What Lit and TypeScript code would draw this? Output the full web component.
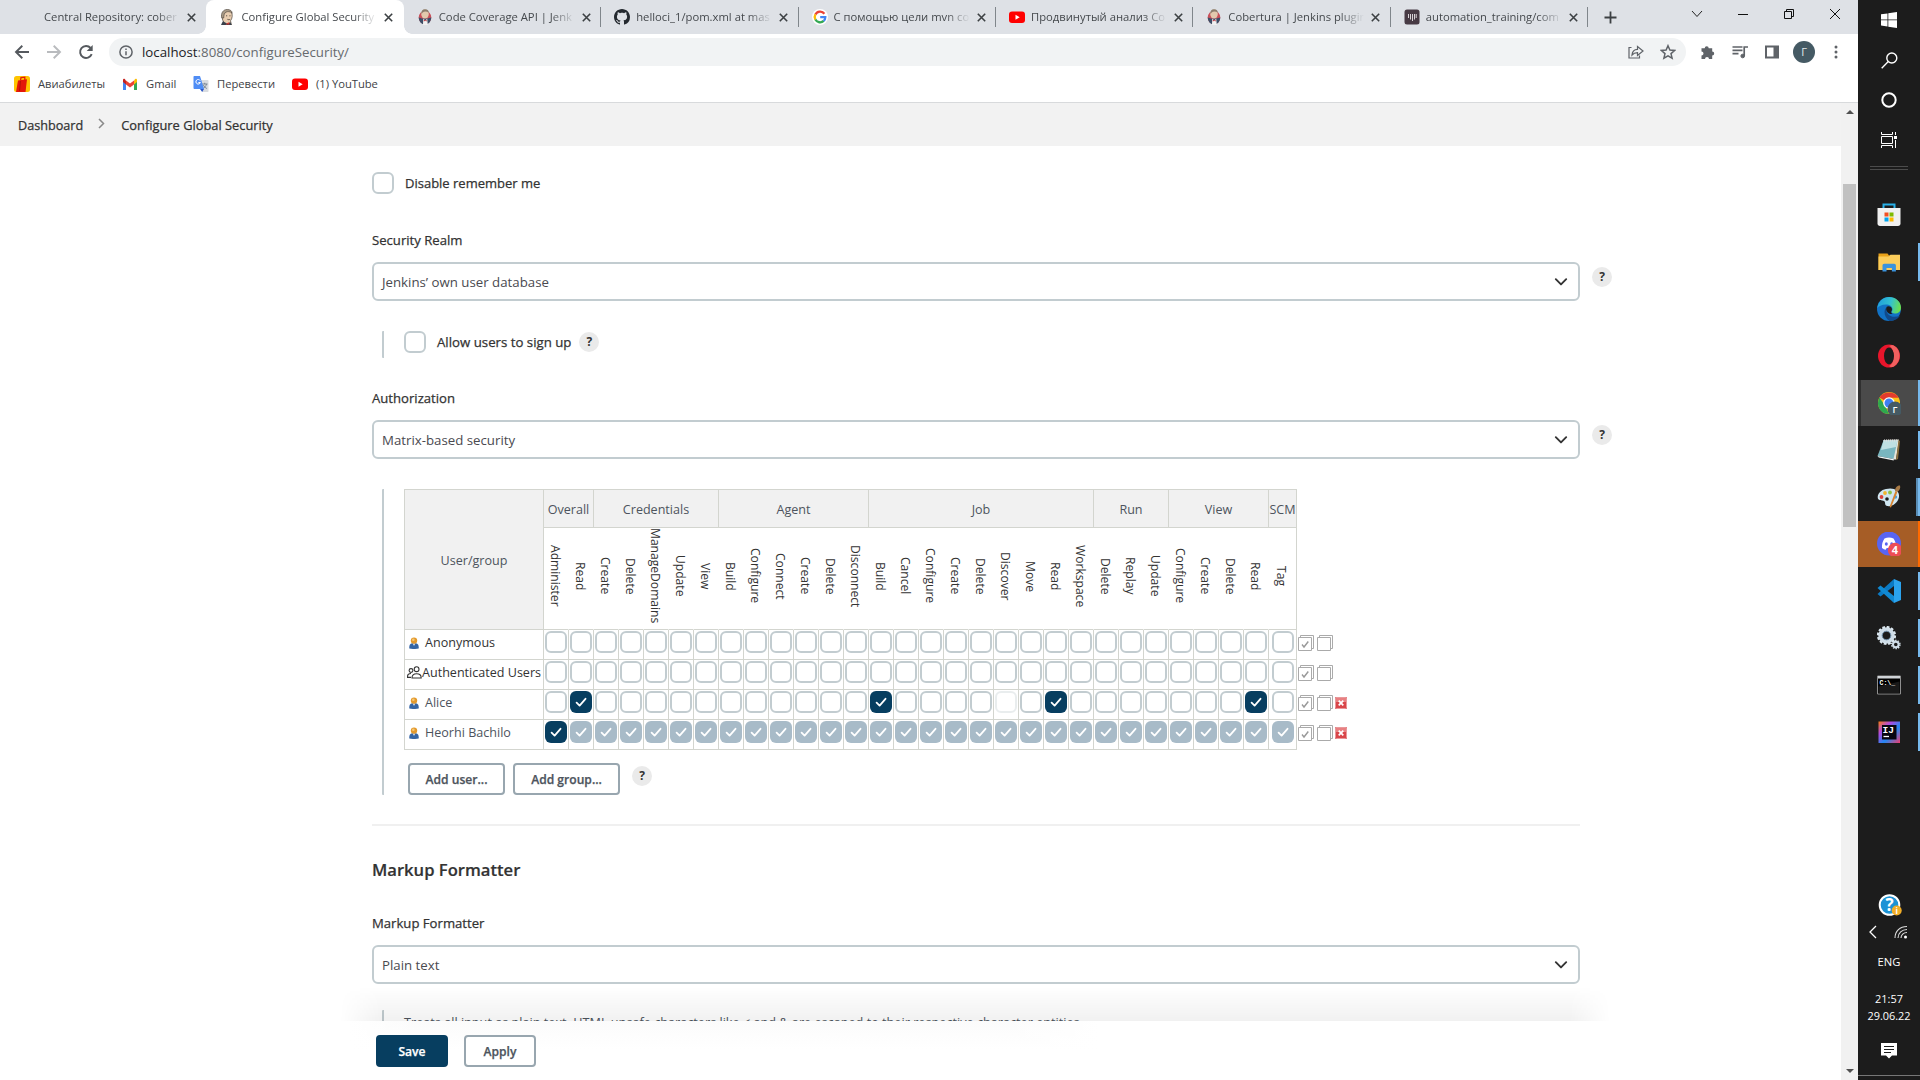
import { LitElement, html, css, svg, nothing } from "lit";
import { customElement, property } from "lit/decorators.js";
import { classMap } from "lit/directives/class-map.js";

const jenkinsFace = svg`
  <path d="M4 4C5 .8 10 .3 12.300 3c1.600 2.600 1 6.500-.8 8.800L12.500 16H4.500l.3-3C3 11 2.600 7 4 4z" fill="#e8cdb0" stroke="#4a4038" stroke-width=".7"/>
  <path d="M2.800 9C1.500 4 4.300.4 8.200.4c2.900 0 5 1.600 5 3.800-2-1.800-4.500-2-6.300-1C5.200 4.200 4.900 6 4.700 9z" fill="#a89a86" stroke="#4a4038" stroke-width=".6"/>
  <path d="M7 6.800h1.200M10.400 6.800h1.100M8.400 10.300c1 .5 2 .4 2.700 0" stroke="#42382f" stroke-width=".8" fill="none"/>
  <path d="M2 16l1.800-3.800L8 14.500l3.500-1.200L12.500 16z" fill="#39414b"/>
  <path d="M8 14.300l2.300-1v2.500l-1.600-.6L6.600 16z" fill="#d33833"/>`;
const jenkinsBadge = svg`
  <ellipse cx="8" cy="8.500" rx="6.300" ry="6.800" fill="#c9505a"/>
  <path d="M1.700 8.500C2 13 5 15.400 8 15.400s6-2.500 6.300-7l-4 1H5z" fill="#3c4f68"/>
  <ellipse cx="8" cy="5" rx="3.800" ry="4.500" fill="#e3c9ad"/>
  <path d="M4.400 5C4 1.500 6 0 8.300.3c2.200 0 3.700 1.700 3.600 3.500C9.500 2 7 2.500 5.700 3.500z" fill="#8c7d6c"/>
  <path d="M6.200 9.500l2 2 2-2 .6 6.500H6z" fill="#f1f1f1"/>
  <path d="M6.800 10.500l1.400 1 1.400-1v2l-1.400-.8-1.400.8z" fill="#b9323b"/>`;
const youtube = svg`<rect y="2.500" width="16" height="11.500" rx="3" fill="#f00"/><path d="M6.500 5.800v5l4.200-2.500z" fill="#fff"/>`;
const google = svg`
  <circle cx="8" cy="8" r="8" fill="#fff"/>
  <g fill="none" stroke-width="2.300">
  <path d="M12.400 4.700A5.300 5.300 0 0 0 3.400 5.600" stroke="#ea4335"/>
  <path d="M3.400 5.400a5.300 5.300 0 0 0 0 5.200" stroke="#fbbc05"/>
  <path d="M3.400 10.500a5.300 5.300 0 0 0 8.300 1.400" stroke="#34a853"/>
  <path d="M11.600 12A5.300 5.300 0 0 0 13.300 8.200H8.200" stroke="#4285f4"/></g>`;
const github = svg`<path fill="#24292f" fill-rule="evenodd" d="M8 0C3.580 0 0 3.580 0 8c0 3.540 2.290 6.530 5.470 7.590.4.070.55-.17.55-.38 0-.19-.010-.82-.010-1.490-2.010.37-2.530-.49-2.690-.94-.090-.23-.48-.94-.82-1.130-.28-.15-.68-.52-.010-.53.63-.010 1.080.58 1.230.82.72 1.210 1.870.87 2.330.66.070-.52.28-.87.51-1.070-1.780-.2-3.640-.89-3.640-3.950 0-.87.31-1.590.82-2.150-.080-.2-.36-1.020.080-2.120 0 0 .67-.21 2.200.82.64-.18 1.320-.27 2-.27s1.360.090 2 .27c1.530-1.040 2.200-.82 2.200-.82.44 1.100.16 1.920.080 2.120.51.56.82 1.270.82 2.150 0 3.070-1.870 3.750-3.650 3.950.29.25.54.73.54 1.480 0 1.070-.010 1.930-.010 2.200 0 .21.15.46.55.38A8.010 8.010 0 0 0 16 8c0-4.420-3.580-8-8-8z"/>`;
const training = svg`<rect x=".5" y=".5" width="15" height="15" rx="2.500" fill="#473a44"/><path d="M4.500 5v4M6.500 5v5.500M8.500 5v7M10.500 5v5.500M12.200 5v4" stroke="#e9e4e8" stroke-width=".9"/>`;

const tabs = [
  { title: "Central Repository: cober", icon: nothing },
  { title: "Configure Global Security", icon: jenkinsFace, active: true },
  { title: "Code Coverage API | Jenk", icon: jenkinsBadge },
  { title: "helloci_1/pom.xml at mas", icon: github },
  { title: "С помощью цели mvn co", icon: google },
  { title: "Продвинутый анализ Co", icon: youtube },
  { title: "Cobertura | Jenkins plugin", icon: jenkinsBadge },
  { title: "automation_training/com", icon: training },
];

const bookmarks = [
  { w: 108, title: "Авиабилеты", icon: svg`<rect width="16" height="16" rx="2.500" fill="#ffc400"/><path d="M4 4.500l9-1.200-1.500 12.700H2z" fill="#e3170a"/><path d="M6.500 4.500L7 1.500l3.800-.3v3" fill="none" stroke="#e3170a" stroke-width="1.300"/><path d="M6.500 5l-1 10" stroke="#a80f06" stroke-width=".8"/>` },
  { w: 71, title: "Gmail", icon: svg`<path d="M1 4.500V14h3V8z" fill="#4285f4"/><path d="M12 8v6h3V4.500z" fill="#34a853"/><path d="M1 3.500V6l3 2.500V4.700L2.800 3C2 2.400 1 2.700 1 3.500z" fill="#c5221f"/><path d="M4 4.500v4l4 3 4-3v-4l-4 3z" fill="#ea4335"/><path d="M12 4.600v3.900L15 6V3.500c0-.9-1-1.100-1.800-.5z" fill="#fbbc04"/>` },
  { w: 99, title: "Перевести", icon: svg`<path d="M7 4h7.500c.7 0 1 .4 1 1v10c0 .6-.3 1-1 1H9.500z" fill="#d9dce0"/><path d="M9 8h5.500M11.700 6.800V8M13.500 8c-.5 2.200-2 3.700-3.500 4.500M10.400 9c.6 1.500 2 2.800 3.500 3.500" fill="none" stroke="#74808c" stroke-width=".9"/><path d="M1.500 0H7l4 13H1.500C.8 13 .5 12.500.5 12V1c0-.6.300-1 1-1z" fill="#4f8df5"/><path d="M7.200 4.600A2.300 2.300 0 1 0 7.400 6.500H5.400" fill="none" stroke="#fff" stroke-width="1"/><path d="M7 13h4l-1.800 3z" fill="#2a56c6"/>` },
  { w: 100, title: "(1) YouTube", icon: youtube },
];

const groups: [string, string[]][] = [
  ["Overall", ["Administer", "Read"]],
  ["Credentials", ["Create", "Delete", "ManageDomains", "Update", "View"]],
  ["Agent", ["Build", "Configure", "Connect", "Create", "Delete", "Disconnect"]],
  ["Job", ["Build", "Cancel", "Configure", "Create", "Delete", "Discover", "Move", "Read", "Workspace"]],
  ["Run", ["Delete", "Replay", "Update"]],
  ["View", ["Configure", "Create", "Delete", "Read"]],
  ["SCM", ["Tag"]],
];
const permissions = groups.flatMap(([g, list]) => list.map((p) => `${g}/${p}`));

interface Member { name: string; group?: boolean; link?: boolean; removable?: boolean; checked: string[]; locked: string[] }
const members: Member[] = [
  { name: "Anonymous", checked: [], locked: [] },
  { name: "Authenticated Users", group: true, checked: [], locked: [] },
  { name: "Alice", link: true, removable: true, checked: ["Overall/Read", "Job/Build", "Job/Read", "View/Read"], locked: ["Job/Discover"] },
  { name: "Heorhi Bachilo", link: true, removable: true, checked: permissions, locked: permissions.slice(1) },
];

@customElement("jenkins-checkbox")
class JenkinsCheckbox extends LitElement {
  @property({ type: Boolean }) checked = false;
  @property({ type: Boolean }) disabled = false;
  static styles = css`
    :host { display: block; width: 22px; height: 22px; flex: none; }
    .box { box-sizing: border-box; width: 22px; height: 22px; border: 2px solid #c2ccd0; border-radius: 6px; background: #fff; }
    .on { border: 0; background: #073e60; }
    .off { opacity: .35; }
    .on.off { opacity: 1; background: #a8bbc8; }
    svg { display: block; }
  `;
  render() {
    return html`<div class=${classMap({ box: true, on: this.checked, off: this.disabled })}>
      ${this.checked ? html`<svg width="22" height="22" fill="none" stroke="#fff" stroke-width="1.8" stroke-linecap="round" stroke-linejoin="round"><path d="M6.600 11.600l3 3 5.900-6.800"/></svg>` : nothing}
    </div>`;
  }
}

@customElement("help-button")
class HelpButton extends LitElement {
  static styles = css`
    :host { display: flex; width: 20px; height: 20px; flex: none; border-radius: 50%; background: #eaeaea;
      align-items: center; justify-content: center; color: #333; font: 700 12px/20px "Open Sans", sans-serif; }
  `;
  render() { return html`?`; }
}

@customElement("jenkins-select")
class JenkinsSelect extends LitElement {
  @property() value = "";
  static styles = css`
    :host { display: flex; box-sizing: border-box; width: 1208px; height: 39px; flex: none; border: 2px solid #c2ccd0; border-radius: 6px;
      align-items: center; justify-content: space-between; padding: 0 10px 0 8px; background: #fff;
      color: #4a4a50; font: 13.250px/20px "Open Sans", sans-serif; }
    span { padding-top: 1px; }
  `;
  render() {
    return html`<span>${this.value}</span>
      <svg width="14" height="10" fill="none" stroke="#333" stroke-width="1.900" stroke-linecap="round" stroke-linejoin="round"><path d="M1.800 2.200L7 7.400 12.200 2.200"/></svg>`;
  }
}

@customElement("permission-matrix")
class PermissionMatrix extends LitElement {
  static styles = css`
    :host { display: block; font: 12.570px/18px "Open Sans", sans-serif; color: #4d545d; }
    .grid { display: grid; grid-template-columns: 139px repeat(29, 25px) 28px max-content; width: max-content;
      grid-template-rows: 38px 102px repeat(4, 30px); border-left: 1px solid #d3d5cf; position: relative; padding-top: 1px; }
    .grid::before { content: ""; position: absolute; left: 0; top: 0; width: 892px; height: 1px; background: #d3d5cf; }
    .cell { box-sizing: border-box; border-right: 1px solid #d3d5cf; border-bottom: 1px solid #d3d5cf; display: flex; justify-content: center; overflow: visible; }
    .corner { grid-row: span 2; background: #f1f1f1; align-items: center; padding-top: 3px; }
    .group { background: #f1f1f1; align-items: center; white-space: nowrap; padding-top: 3px; }
    .perm { border-right-color: transparent; align-items: center; padding: 0 3px 5px 0; font-size: 12.100px; color: #333; }
    .perm span { writing-mode: vertical-rl; white-space: nowrap; line-height: 18px; }
    .last { border-right-color: #d3d5cf; }
    .box { padding-top: 1px; }
    .spacer { grid-row: span 2; }
    .name { justify-content: flex-start; align-items: center; white-space: nowrap; padding: 0 0 4px 4px; color: #333; }
    .name svg { flex: none; margin-right: 6px; }
    .name.wide { padding-left: 2px; }
    .name.wide svg { margin-right: 0; }
    .link { color: #4d545d; }
    .tools { display: flex; padding: 5px 0 0 1px; }
    .tools svg { margin-right: 3px; }
    .tools svg.stop { margin: 2px 0 0 -1px; }
  `;
  render() {
    return html`<div class="grid">
      <div class="cell corner">User/group</div>
      ${groups.map(([g, list]) => html`<div class="cell group" style="grid-column: span ${list.length}">${g}</div>`)}
      <div class="spacer"></div>
      ${permissions.map((p, i) => html`<div class=${classMap({ cell: true, perm: true, last: i === permissions.length - 1 })}><span>${p.split("/")[1]}</span></div>`)}
      ${members.map((m) => this.row(m))}
    </div>`;
  }
  private row(m: Member) {
    return html`
      <div class=${classMap({ cell: true, name: true, wide: !!m.group, link: !!m.link })}>
        ${m.group
          ? html`<svg width="15" height="13" fill="none" stroke="#333" stroke-width="1.100"><circle cx="4" cy="4.500" r="1.900"/><circle cx="9.600" cy="3.200" r="2.400"/><path d="M.6 11.400v-1.600c.2-1.600 1.500-2.300 3.400-2.300M0 11.400h4M5 12c0-2.900 1.500-4.300 4.600-4.300s4.600 1.400 4.600 4.300z"/></svg>`
          : html`<svg width="10" height="12"><path d="M.3 11.500C0 8.500 1 6.500 3 6.300h4c2 .2 3 2.200 2.700 5.200C7 12.200 3 12.200.3 11.500z" fill="#3465a4"/><path d="M3.700 6.500L5 9l1.300-2.500z" fill="#dfe8f3"/><circle cx="5" cy="3.600" r="3.200" fill="#e39a2d"/><circle cx="4.300" cy="2.700" r="1.300" fill="#f6c878"/></svg>`}
        ${m.name}
      </div>
      ${permissions.map((p) => html`<div class="cell box"><jenkins-checkbox ?checked=${m.checked.includes(p)} ?disabled=${m.locked.includes(p)}></jenkins-checkbox></div>`)}
      <div class="tools">
        ${[true, false].map((c) => html`<svg width="16" height="17" fill="none" stroke="#aaa"><path d="M2.500 2.500v-2h13v13h-2"/><path d="M.5 2.500h13v13H.5z" fill="#fff"/>${c ? svg`<path d="M4 9.500l2 2.500 4.300-5.500" stroke="#999" stroke-width="1.400"/>` : nothing}</svg>`)}
        ${m.removable ? html`<svg class="stop" width="12" height="12"><rect width="12" height="12" rx="1" fill="#d9464a"/><rect x="0" y="0" width="12" height="5" rx="1" fill="#e87f81"/><rect x=".5" y=".5" width="11" height="11" rx="1" fill="none" stroke="#e99a9c"/><path d="M3.700 3.700l4.600 4.600M8.300 3.700l-4.600 4.600" stroke="#fff" stroke-width="1.700"/></svg>` : nothing}
      </div>`;
  }
}

const taskIcons = {
  store: svg`<path d="M6.500 6V1.500h11V6" fill="none" stroke="#29b0e8" stroke-width="2"/><path d="M.5 5h23v15.500c0 1.500-1 2.500-2.500 2.500H3c-1.500 0-2.500-1-2.500-2.500z" fill="#f0f0f0"/><path d="M7.500 9.500h4v4h-4z" fill="#f25022"/><path d="M12.500 9.500h4v4h-4z" fill="#7fba00"/><path d="M7.500 14.500h4v4h-4z" fill="#00a4ef"/><path d="M12.500 14.500h4v4h-4z" fill="#ffb900"/>`,
  folder: svg`<path d="M1.500 3.500h9l1.500 2h11V20h-21.500z" fill="#e9a21a"/><path d="M1.500 6.500h10l2-1.800H23V20H1.500z" fill="#fbcd5b"/><path d="M5.500 21.500v-6c0-1 .7-1.700 1.700-1.700h10c1 0 1.700.7 1.700 1.700v6h-4v-3.500H9.500v3.500z" fill="#3a93dd"/>`,
  edge: svg`<defs><linearGradient id="eg" x1="0" y1=".3" x2="1" y2=".5"><stop offset="0" stop-color="#1f9fdc"/><stop offset=".55" stop-color="#34c1d0"/><stop offset="1" stop-color="#6be04c"/></linearGradient></defs><circle cx="12" cy="12" r="12" fill="#1272c5"/><path d="M9.300 10.500C6 14 7.500 21 12.500 23.900c4.500.3 8.500-1.900 10.500-5.400C15 22 8 17.500 9.300 10.500z" fill="#114a8b"/><path d="M.3 11C1.200 4.500 6 0 12 0c7 0 12 5 12 10.500 0 4-3 6-6 6-2 0-3.500-.8-3.300-1.700.2-.6.8-1 .8-2.500C15.500 9.500 12.500 7.500 9 7.500 4.500 7.500 1.500 9.500.3 11z" fill="url(#eg)"/><path d="M9.700 9.800c1.500-1.500 5.300-.3 5.300 2.500 0 1.300-.6 2-.8 2.500-.2.500.1 1.500 1.500 2.200-4 .8-8-3-6-7.200z" fill="#1c1c1c"/>`,
  opera: svg`<ellipse cx="12" cy="12" rx="11" ry="11.500" fill="#e8152b"/><path d="M15 1c9 2 10.500 16 2 21.500-2 1-4 .7-5-.5 6-2 6-18 0-20z" fill="#f2605f"/><ellipse cx="12" cy="12" rx="5" ry="8.500" fill="#1c1c1c"/>`,
  chrome: svg`<circle cx="12" cy="12" r="11" fill="#fbc116"/><path d="M12 12L2.500 6.500C6 0 18-.5 21.600 6.800H12z" fill="#e33b2e"/><path d="M2.400 6.600l6 8.600L12 23C3 23-1.500 14 2.400 6.600z" fill="#2da94f"/><circle cx="12" cy="12" r="5.800" fill="#fff"/><circle cx="12" cy="12" r="4.500" fill="#3f7ff0"/><circle cx="18" cy="18" r="7.500" fill="#455a64"/><text class="cyr" x="15.500" y="21.500">Г</text>`,
  notepad: svg`<path d="M6 2l16-.5-3 20H16z" fill="#e7e4d8"/><path d="M21.500 2l1.500 1-2 18-2 1z" fill="#8b6f3c"/><path d="M6.500 2.500h14L16.500 21 .5 18z" fill="#79b6bf"/><path d="M6.500 2.500h14L19 9 4 12z" fill="#bfe0e2"/><path d="M.5 18l16 3 .3 1.500-15-3z" fill="#eef5f5"/><path d="M7 2.500h13" stroke="#ddd" stroke-width="2" stroke-dasharray="1 1"/>`,
  paint: svg`<path d="M9 4c7-2 14 1 13 8-1 6-7 10-12 9-3-1-1-4-3-5S.5 16 .7 12C1 8 4 5 9 4z" fill="#cfe6f1"/><circle cx="8" cy="8" r="1.900" fill="#f1b52e"/><circle cx="13" cy="7.500" r="1.900" fill="#8bc34a"/><circle cx="4.500" cy="12" r="1.900" fill="#d9413b"/><circle cx="10" cy="14" r="1.800" fill="#1c1c1c"/><circle cx="18.500" cy="12" r="1.700" fill="#4aa2d9"/><path d="M12.500 22l6-16 2 .8L14 22.500z" fill="#d88430"/><path d="M18 6c0-3 1.500-5.500 5-5.500.8 2-.5 5-2.500 6.300z" fill="#a77a46"/>`,
  discord: svg`<circle cx="12" cy="11.500" r="12" fill="#5865f2"/><path d="M7.500 6.500c3-1.200 6-1.200 9 0 2 3 2.800 6 2.500 9.500-1.300 1-2.500 1.500-3.700 1.700l-1-1.700H9.700l-1 1.700C7.500 17.500 6.300 17 5 16c-.3-3.500.5-6.500 2.500-9.500z" fill="#fff"/><ellipse cx="9.300" cy="12" rx="1.500" ry="1.700" fill="#5865f2"/><ellipse cx="14.700" cy="12" rx="1.500" ry="1.700" fill="#5865f2"/><circle cx="18" cy="18" r="7.200" fill="#ed4d55"/><text class="count" x="14.800" y="22">4</text>`,
  vscode: svg`<path d="M17 0l7 3v18l-7 3z" fill="#2ba3ee"/><path d="M17 0v7L3.500 17.500.5 15z" fill="#0b7ac4"/><path d="M17 24v-7L3.500 6.500.5 9z" fill="#1089d3"/>`,
  gears: svg`<circle cx="9.500" cy="9.500" r="6.300" fill="none" stroke="#cfdde8" stroke-width="4"/><circle cx="9.500" cy="9.500" r="8.600" fill="none" stroke="#dce8f0" stroke-width="2" stroke-dasharray="2.700 1.800"/><circle cx="9.500" cy="9.500" r="4.300" fill="none" stroke="#6f8ea9" stroke-width="1"/><circle cx="18.800" cy="18.500" r="2.800" fill="none" stroke="#cfdde8" stroke-width="2"/><circle cx="18.800" cy="18.500" r="4.200" fill="none" stroke="#dce8f0" stroke-width="1.300" stroke-dasharray="1.500 1.150"/>`,
  cmd: svg`<path d="M.5 3h23v18H.5z" fill="#000" stroke="#8f8f8f"/><path d="M1 3h22v2.500H1z" fill="#d0d4d8"/><path d="M1.500 13.500l21-5v12h-21z" fill="#2a2a2a" opacity=".6"/><text class="cmd" x="2.500" y="12">C:\\_</text>`,
  idea: svg`<defs><linearGradient id="ij" x1="0" y1="0" x2="1" y2="1"><stop offset="0" stop-color="#f97a12"/><stop offset=".3" stop-color="#b24ae0"/><stop offset=".6" stop-color="#2188f3"/><stop offset="1" stop-color="#f13c6e"/></linearGradient></defs><path d="M1.500 1.500h21.500v21.500H1.500z" fill="url(#ij)"/><path d="M5 5h14.500v14.500H5z" fill="#070612"/><text class="ij" x="5.500" y="13">IJ</text><path d="M6.500 16.500h5.500" stroke="#fff" stroke-width="1.300"/>`,
};
const running = [
  { icon: taskIcons.store, mark: "" }, { icon: taskIcons.folder, mark: "mark" },
  { icon: taskIcons.edge, mark: "" }, { icon: taskIcons.opera, mark: "" },
  { icon: taskIcons.chrome, mark: "mark current" }, { icon: taskIcons.notepad, mark: "mark" },
  { icon: taskIcons.paint, mark: "mark twice" }, { icon: taskIcons.discord, mark: "mark alert" },
  { icon: taskIcons.vscode, mark: "mark" }, { icon: taskIcons.gears, mark: "mark" },
  { icon: taskIcons.cmd, mark: "mark" }, { icon: taskIcons.idea, mark: "mark" },
];

@customElement("task-bar")
class TaskBar extends LitElement {
  static styles = css`
    :host { display: flex; flex-direction: column; width: 62px; height: 1080px; flex: none; background: #1c1c1c; color: #fff;
      font: 11.200px/17px "Open Sans", sans-serif; }
    svg { display: block; flex: none; }
    .sys { height: 40px; display: flex; align-items: center; justify-content: center; }
    .rule { box-sizing: border-box; height: 4px; margin: 6px 12px 21px; border: solid #4c4c4c; border-width: 1px 0; }
    .app { box-sizing: border-box; height: 46px; margin-top: 1px; display: flex; align-items: center; padding-left: 19px; }
    .mark::after { content: ""; margin-left: auto; width: 2px; height: 38px; background: #76b9ed; }
    .twice::after { width: 2px; border-left: 2px solid #5a8db5; }
    .current { background: #4a4a4a; border-left: 3px solid #303030; padding-left: 16px; }
    .current::after, .alert::after { height: 46px; }
    .alert { background: #a65d26; }
    .alert::after { background: #ff6a00; }
    .tray { margin-top: auto; display: flex; flex-direction: column; align-items: center; height: 186px; }
    .tray .help { margin-left: 1px; }
    .pair { display: flex; align-items: center; gap: 17px; height: 14px; margin-top: 9px; padding-right: 1px; }
    .lang { margin-top: 14px; }
    .time { margin-top: 20px; text-align: center; font-size: 10.900px; }
    .note { margin-top: 19px; }
    .end { align-self: stretch; height: 1px; background: #777; margin-top: auto; margin-bottom: 4px; }
    .cyr { font: 600 9px "Open Sans", sans-serif; fill: #fff; }
    .count { font: 700 11px "Open Sans", sans-serif; fill: #fff; }
    .cmd { font: 700 6.500px "Liberation Mono", monospace; fill: #fff; }
    .ij { font: 700 9.500px "Liberation Mono", monospace; fill: #fff; }
    .ask { font: 700 17px "Open Sans", sans-serif; fill: #fff; }
    .info { font: 700 8px "Open Sans", sans-serif; fill: #fff; }
  `;
  render() {
    return html`
      <div class="sys"><svg width="16" height="16" fill="#fff"><path d="M0 2.300l6.500-.9v6.100H0zM7.300 1.300L16 0v7.500H7.300zM0 8.300h6.500v6.200L0 13.600zM7.300 8.300H16V16l-8.700-1.300z"/></svg></div>
      <div class="sys"><svg width="17" height="17" fill="none" stroke="#fff" stroke-width="1.400"><circle cx="10.800" cy="6" r="5"/><path d="M7.300 9.600L.7 16.200"/></svg></div>
      <div class="sys"><svg width="16" height="16" fill="none" stroke="#fff" stroke-width="2"><circle cx="8" cy="8" r="6.700"/></svg></div>
      <div class="sys"><svg width="16" height="16" fill="none" stroke="#fff"><path d="M.5 0v2.500h11V0M.5 16v-2.500h11V16M.5 4.500h11v7H.5zM14.500 0v3M14.500 8v8"/><path d="M13 4h3v3h-3z" fill="#fff" stroke="none"/></svg></div>
      <div class="rule"></div>
      ${running.map((a) => html`<div class="app ${a.mark}"><svg width="24" height="24">${a.icon}</svg></div>`)}
      <div class="tray">
        <svg class="help" width="24" height="22"><circle cx="11.500" cy="11" r="9.800" fill="#1c93d6" stroke="#fff" stroke-width="2"/><text class="ask" x="7.500" y="17">?</text><circle cx="18.700" cy="16.500" r="5" fill="#f2ae27"/><text class="info" x="17.600" y="19.500">i</text></svg>
        <div class="pair">
          <svg width="8" height="14" fill="none" stroke="#fff" stroke-width="1.300"><path d="M7 1L1 7l6 6"/></svg>
          <svg width="14" height="14" fill="none" stroke="#fff" stroke-width="1.100"><path d="M1 13C1 6 6 1.500 13 1.500M4 13c0-5 4-8.500 9-8.500M7 13c0-3 2.500-5.500 6-5.500" opacity=".85"/><circle cx="11.500" cy="12" r="1.500" fill="#fff" stroke="none"/></svg>
        </div>
        <div class="lang">ENG</div>
        <div class="time">21:57<br>29.06.22</div>
        <svg class="note" width="16" height="16"><path d="M0 0h16v12.500h-5L8 15.500l-3-3H0z" fill="#fff"/><path d="M3 3.500h10M3 6.500h10M3 9.500h7" stroke="#1c1c1c"/></svg>
        <div class="end"></div>
      </div>`;
  }
}

@customElement("app-root")
class AppRoot extends LitElement {
  static styles = css`
    :host { display: flex; width: 1920px; height: 1080px; overflow: hidden; background: #fff; font-family: "Open Sans", "Noto Sans", sans-serif; }
    svg { display: block; flex: none; }
    .browser { width: 1858px; flex: none; display: flex; flex-direction: column; }
    .tabs { box-sizing: border-box; height: 34px; flex: none; display: flex; background: #dee1e6; padding-left: 9px; }
    .tab { box-sizing: border-box; width: 197.400px; flex: none; display: flex; align-items: center; padding-left: 13px; height: 34px; font-size: 11.260px; color: #45494d; position: relative; }
    .tab .fav { width: 16px; height: 16px; margin-right: 6px; }
    .title { width: 136px; overflow: hidden; white-space: nowrap; line-height: 18px; -webkit-mask-image: linear-gradient(90deg, #000 112px, transparent 136px); mask-image: linear-gradient(90deg, #000 112px, transparent 136px); }
    .tab .x { margin-left: 7px; }
    .divided::after { content: ""; position: absolute; right: 0; top: 7px; width: 1px; height: 20px; background: #80868b; }
    .active { background: #fff; border-radius: 8px 8px 0 0; }
    .active::before, .active::after { content: ""; position: absolute; bottom: 0; width: 8px; height: 8px; }
    .active::before { left: -8px; background: radial-gradient(circle at 0 0, transparent 7.500px, #fff 8px); }
    .active::after { right: -8px; background: radial-gradient(circle at 100% 0, transparent 7.500px, #fff 8px); }
    .plus { margin: 11px 0 0 16px; }
    .window { margin-left: auto; display: flex; gap: 34px; padding: 8px 17px 0 0; }
    .bar { height: 36px; flex: none; display: flex; align-items: center; padding-left: 14px; }
    .nav { display: flex; gap: 16px; }
    .omni { box-sizing: border-box; width: 1577px; height: 28px; margin-left: 15px; border-radius: 14px; background: #f1f3f4; display: flex; align-items: center; padding: 0 10px; font-size: 13.270px; color: #666a6e; }
    .url { margin-left: 9px; line-height: 20px; }
    .host { color: #202124; }
    .share { margin-left: auto; margin-right: 16px; }
    .ext { display: flex; align-items: center; margin-left: 14px; }
    .ext svg { margin-right: 16px; }
    .avatar { width: 22px; height: 22px; border-radius: 50%; background: #455a64; color: #e6eaec; font-size: 11px; line-height: 22px; text-align: center; margin: 0 19px 0 -3px; }
    .marks { box-sizing: border-box; height: 33px; flex: none; display: flex; padding-left: 14px; border-bottom: 1px solid #d8dadc; font-size: 11.200px; color: #3e4246; }
    .mk { display: flex; align-items: center; height: 28px; gap: 8px; white-space: nowrap; }
    .mk span { padding-bottom: 1px; }
    .view { flex: 1; display: flex; min-height: 0; }
    .page { width: 1841px; display: flex; flex-direction: column; }
    .crumbs { height: 43px; flex: none; background: #f2f2f2; display: flex; align-items: center; padding-left: 18px; font-size: 12.850px; color: #333; -webkit-text-stroke: .25px #333; }
    .crumbs svg { margin: -3px 16px 0 15px; }
    .dash { font-size: 12.650px; }
    .form { box-sizing: border-box; height: 875px; flex: none; overflow: hidden; padding: 26px 0 0 372px; display: flex; flex-direction: column; align-items: flex-start; }
    .form > * { flex: none; }
    .check { display: flex; align-items: center; height: 22px; gap: 11px; font-size: 13px; font-weight: 500; color: #333; -webkit-text-stroke: .25px #333; }
    .signup .check { font-size: 13.240px; }
    .check help-button { margin-left: -3px; -webkit-text-stroke: 0; }
    .label { height: 20px; line-height: 20px; margin-top: 30px; font-size: 13.140px; font-weight: 500; color: #333; -webkit-text-stroke: .25px #333; }
    .first { margin-top: 36px; }
    .low { margin-top: 31px; }
    .row { display: flex; margin-top: 12px; gap: 12px; }
    .row help-button { margin-top: 5px; }
    .nested { box-sizing: border-box; margin: 30px 0 0 10px; border-left: 2px solid #c2ccd0; padding-left: 20px; border-radius: 1px; }
    .signup { height: 27px; }
    .matrix { height: 306px; }
    .adders { display: flex; margin: 13px 0 0 4px; gap: 8px; }
    .adders help-button { margin: 3px 0 0 4px; }
    .btn { box-sizing: border-box; height: 32px; border: 2px solid #98a6af; border-radius: 4px; display: flex; align-items: center; justify-content: center; font-size: 12.100px; font-weight: 600; color: #4d545d; background: #fff; -webkit-text-stroke: .25px currentColor; }
    .b97 { width: 97px; } .b107 { width: 107px; } .b72 { width: 72px; }
    .primary { background: #073e60; border-color: #073e60; color: #fff; }
    .hr { width: 1208px; height: 2px; background: #f0f0f0; margin-top: 29px; }
    .h2 { font-size: 16.620px; font-weight: 600; line-height: 24px; margin-top: 32px; color: #333; -webkit-text-stroke: .2px #333; }
    .desc { margin-top: 26px; height: 40px; font-size: 12.680px; line-height: 24px; color: #4d545d; white-space: nowrap; }
    .footer { position: relative; flex: 1; display: flex; align-items: flex-start; gap: 16px; padding: 14px 0 0 376px; background: linear-gradient(90deg, #fff 350px, transparent 420px, transparent 1000px, #fff 1100px), linear-gradient(#fbfbfb, #fff 28px); }
    .footer::before { content: ""; position: absolute; left: 340px; width: 1270px; bottom: 100%; height: 34px; background: linear-gradient(rgba(0,0,0,0), rgba(0,0,0,.055));
      -webkit-mask-image: linear-gradient(90deg, transparent, #000 40px, #000 1230px, transparent); mask-image: linear-gradient(90deg, transparent, #000 40px, #000 1230px, transparent); }
    .scroll { box-sizing: border-box; width: 17px; background: #f1f1f1; display: flex; flex-direction: column; align-items: center; padding: 7px 0; }
    .thumb { width: 13px; height: 343px; background: #c1c1c1; margin: 70px 0 auto; }
  `;
  render() {
    return html`
      <div class="browser">
        <div class="tabs">
          ${tabs.map((t, i) => html`<div class=${classMap({ tab: true, active: !!t.active, divided: i > 1 })}>
            <svg class="fav" viewBox="0 0 16 16">${t.icon}</svg><div class="title">${t.title}</div>
            <svg class="x" width="9" height="9" stroke="#3c4043" stroke-width="1.600"><path d="M.8.8l7.400 7.400M8.200.8L.8 8.200"/></svg>
          </div>`)}
          <svg class="plus" width="13" height="13" stroke="#3c4043" stroke-width="1.800"><path d="M6.500.5v12M.5 6.500h12"/></svg>
          <div class="window">
            <svg width="12" height="12" fill="none" stroke="#222"><path d="M1 3l5 5.500L11 3"/></svg>
            <svg width="12" height="12" stroke="#111"><path d="M1 6.500h10"/></svg>
            <svg width="12" height="12" fill="none" stroke="#111"><path d="M1.500 3.500h7v7h-7zM3.500 3.500v-2h7v7h-2"/></svg>
            <svg width="12" height="12" stroke="#111"><path d="M1 1l10 10M11 1L1 11"/></svg>
          </div>
        </div>
        <div class="bar">
          <div class="nav">
            <svg width="16" height="16" fill="none" stroke="#55595e" stroke-width="1.900"><path d="M15 8H2.300M8.300 1.800L2 8l6.300 6.200"/></svg>
            <svg width="16" height="16" fill="none" stroke="#b9bbbe" stroke-width="1.900"><path d="M1 8h12.700M7.700 1.800L14 8l-6.300 6.200"/></svg>
            <svg width="16" height="16" fill="none" stroke="#55595e" stroke-width="1.900"><path d="M13.700 10.200A6 6 0 1 1 12.600 4"/><path d="M14.700 1v6H8.700z" fill="#55595e" stroke="none"/></svg>
          </div>
          <div class="omni">
            <svg width="14" height="14" fill="none" stroke="#5f6368" stroke-width="1.500"><circle cx="7" cy="7" r="6.100"/><path d="M7 6.200v4M7 3.500v1.500"/></svg>
            <div class="url"><span class="host">localhost</span>:8080/configureSecurity/</div>
            <svg class="share" width="16" height="16" fill="none" stroke="#5f6368" stroke-width="1.200"><path d="M3.500 3.500h-2.500v10.500h10.500v-2.500"/><path d="M4 11c.3-3.600 2.200-5.600 5.500-5.700V2.500L15 7l-5.500 4.500V8.700C7 8.700 5.300 9.500 4 11z"/></svg>
            <svg width="16" height="16" fill="none" stroke="#5f6368" stroke-width="1.500"><path d="M8 1.700l1.900 4.400 4.700.4-3.600 3.100 1.100 4.600L8 11.800l-4.100 2.400L5 9.600 1.400 6.500l4.700-.4z"/></svg>
          </div>
          <div class="ext">
            <svg width="16" height="16" fill="#5f6368"><path d="M1.500 4.300h3.200a2 2 0 1 1 4 0h3.500v3.300a2 2 0 1 1 0 4V15H9a2 2 0 0 0-4 0H1.500v-3.500a2 2 0 0 0 0-4z"/></svg>
            <svg width="16" height="16" fill="none" stroke="#5f6368" stroke-width="1.700"><path d="M.5 3h10M.5 6.300h10M.5 9.600h6"/><path d="M12.200 12V3H16" /><circle cx="10.700" cy="12" r="1.800" fill="#5f6368" stroke-width="1"/></svg>
            <svg width="16" height="16"><path d="M1 1.500h14v13H1zM3 3.500v9h6.500v-9z" fill="#5f6368" fill-rule="evenodd"/></svg>
            <div class="avatar">Г</div>
            <svg width="4" height="16" fill="#5f6368"><circle cx="2" cy="3" r="1.500"/><circle cx="2" cy="8" r="1.500"/><circle cx="2" cy="13" r="1.500"/></svg>
          </div>
        </div>
        <div class="marks">
          ${bookmarks.map((b) => html`<div class="mk" style="width:${b.w}px"><svg width="16" height="16">${b.icon}</svg><span>${b.title}</span></div>`)}
        </div>
        <div class="view">
          <div class="page">
            <div class="crumbs">
              <span class="dash">Dashboard</span>
              <svg width="7" height="11" fill="none" stroke="#8a8a8a" stroke-width="1.500"><path d="M1 1l4.500 4.500L1 10"/></svg>
              <span>Configure Global Security</span>
            </div>
            <div class="form">
              <div class="check"><jenkins-checkbox></jenkins-checkbox>Disable remember me</div>
              <div class="label first">Security Realm</div>
              <div class="row"><jenkins-select value="Jenkins’ own user database"></jenkins-select><help-button></help-button></div>
              <div class="nested signup"><div class="check"><jenkins-checkbox></jenkins-checkbox>Allow users to sign up<help-button></help-button></div></div>
              <div class="label">Authorization</div>
              <div class="row"><jenkins-select value="Matrix-based security"></jenkins-select><help-button></help-button></div>
              <div class="nested matrix">
                <permission-matrix></permission-matrix>
                <div class="adders">
                  <div class="btn b97">Add user...</div><div class="btn b107">Add group...</div><help-button></help-button>
                </div>
              </div>
              <div class="hr"></div>
              <div class="h2">Markup Formatter</div>
              <div class="label low">Markup Formatter</div>
              <div class="row"><jenkins-select value="Plain text"></jenkins-select></div>
              <div class="nested desc">Treats all input as plain text. HTML unsafe characters like &lt; and &amp; are escaped to their respective character entities.</div>
            </div>
            <div class="footer"><div class="btn b72 primary">Save</div><div class="btn b72">Apply</div></div>
          </div>
          <div class="scroll">
            <svg width="8" height="4"><path d="M0 4l4-4 4 4z" fill="#505050"/></svg>
            <div class="thumb"></div>
            <svg width="8" height="4"><path d="M0 0l4 4 4-4z" fill="#505050"/></svg>
          </div>
        </div>
      </div>
      <task-bar></task-bar>`;
  }
}
